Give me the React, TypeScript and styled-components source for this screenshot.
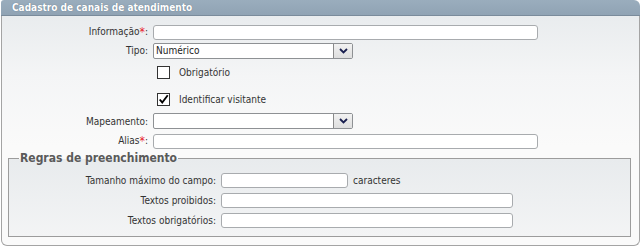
import React from "react";
import styled, { createGlobalStyle } from "styled-components";

const Global = createGlobalStyle`
  html, body { margin: 0; padding: 0; background: #ffffff; }
  body { font-family: "DejaVu Sans Condensed", Tahoma, sans-serif; font-size: 10px; color: #333; }
`;

const Panel = styled.div`
  width: 639px;
  margin-left: 1px;
  box-sizing: border-box;
`;

const Header = styled.div`
  height: 16px;
  box-sizing: border-box;
  background: linear-gradient(#9aadbd, #90a3b4);
  border-bottom: 1px solid #7a8b9b;
  border-radius: 3px 6px 0 0;
  color: #fff;
  font-weight: bold;
  font-size: 10px;
  line-height: 15px;
  padding-left: 11px;
  text-shadow: 0 0 1px #55697a;
`;

const Body = styled.div`
  border: 1px solid #a4a4a4;
  border-top: none;
  border-radius: 0 0 6px 6px;
  background: linear-gradient(#e9ecee 0px, #f4f5f6 60px, #fafafa 130px, #fafafa 100%);
  padding: 6px 7px 7px 6px;
  height: 230px;
  box-sizing: border-box;
`;

const Row = styled.div<{ $h: number; $label: number }>`
  display: grid;
  grid-template-columns: ${(p) => p.$label}px 1fr;
  column-gap: 5px;
  align-items: center;
  height: ${(p) => p.$h}px;
`;

const Label = styled.label`
  text-align: right;
  white-space: nowrap;
  color: #333;
`;

const Req = styled.span`
  color: #e8202a;
  font-size: 12px;
  vertical-align: -1px;
`;

const TextInput = styled.div<{ $w: number }>`
  width: ${(p) => p.$w}px;
  height: 15px;
  box-sizing: border-box;
  background: #fff;
  border: 1px solid #a8abae;
  border-radius: 3px;
`;

const Inline = styled.div`
  display: flex;
  align-items: center;
  gap: 5px;
`;

const Select = styled.div<{ $w: number }>`
  width: ${(p) => p.$w}px;
  height: 16px;
  box-sizing: border-box;
  background: #fff;
  border: 1px solid #8e9194;
  border-radius: 2px;
  display: flex;
  align-items: center;
  justify-content: space-between;
  padding-left: 2px;
  color: #222;
  line-height: 14px;
`;

const SelectBtn = styled.div`
  width: 19px;
  height: 14px;
  box-sizing: border-box;
  border-left: 1px solid #8a8a8a;
  background: linear-gradient(#f2f2f2, #dedede);
  display: flex;
  align-items: center;
  justify-content: center;
`;

const CheckRow = styled.div<{ $h: number }>`
  height: ${(p) => p.$h}px;
  display: flex;
  align-items: center;
  padding-left: 149px;
  gap: 9px;
`;

const Box = styled.div`
  width: 13px;
  height: 13px;
  box-sizing: border-box;
  border: 1px solid #333;
  background: #fff;
  display: flex;
  align-items: center;
  justify-content: center;
`;

const Fieldset = styled.fieldset`
  margin: -2px 1px 0 0;
  padding: 5px 0 0 0;
  border: 1px solid #9c9c9c;
  background: linear-gradient(#e8ebed, #f3f4f5);
  height: 86px;
  box-sizing: border-box;
`;

const Legend = styled.legend`
  font-size: 12px;
  font-weight: bold;
  color: #5a5a5a;
  padding: 0 1px;
  margin-left: 10px;
  line-height: 14px;
`;

const Chevron = () => (
  <svg width="9" height="6" viewBox="0 0 9 6">
    <path d="M1 1 L4.5 4.5 L8 1" fill="none" stroke="#1a2050" strokeWidth="1.8" />
  </svg>
);

const Check = () => (
  <svg width="13" height="13" viewBox="0 0 13 13" style={{ marginTop: -1 }}>
    <path d="M2 6.5 L5 10 L11.5 1.5" fill="none" stroke="#000" strokeWidth="2.2" />
  </svg>
);

export default function App() {
  return (
    <>
      <Global />
      <Panel>
        <Header>Cadastro de canais de atendimento</Header>
        <Body>
          <Row $h={20} $label={140}>
            <Label>
              Informação<Req>*</Req>:
            </Label>
            <TextInput $w={385} />
          </Row>
          <Row $h={17} $label={140}>
            <Label>Tipo:</Label>
            <Select $w={200}>
              <span>Numérico</span>
              <SelectBtn>
                <Chevron />
              </SelectBtn>
            </Select>
          </Row>
          <CheckRow $h={27}>
            <Box />
            <span>Obrigatório</span>
          </CheckRow>
          <CheckRow $h={27}>
            <Box>
              <Check />
            </Box>
            <span>Identificar visitante</span>
          </CheckRow>
          <Row $h={16} $label={140}>
            <Label>Mapeamento:</Label>
            <Select $w={200}>
              <span />
              <SelectBtn>
                <Chevron />
              </SelectBtn>
            </Select>
          </Row>
          <Row $h={24} $label={140}>
            <Label>
              Alias<Req>*</Req>:
            </Label>
            <TextInput $w={385} />
          </Row>
          <Fieldset>
            <Legend>Regras de preenchimento</Legend>
            <Row $h={20} $label={207}>
              <Label>Tamanho máximo do campo:</Label>
              <Inline>
                <TextInput $w={127} />
                <span>caracteres</span>
              </Inline>
            </Row>
            <Row $h={20} $label={207}>
              <Label>Textos proibidos:</Label>
              <TextInput $w={292} />
            </Row>
            <Row $h={20} $label={207}>
              <Label>Textos obrigatórios:</Label>
              <TextInput $w={292} />
            </Row>
          </Fieldset>
        </Body>
      </Panel>
    </>
  );
}
